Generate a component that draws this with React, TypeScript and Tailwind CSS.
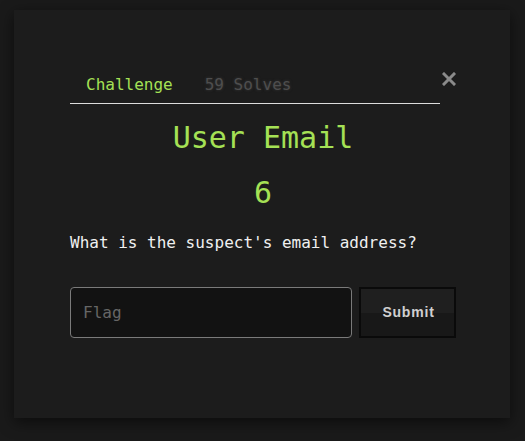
import React from "react";

export default function App() {
  const mono = { fontFamily: '"DejaVu Sans Mono", monospace' };
  return (
    <div className="w-[525px] h-[441px] bg-[#1a1a1a] pt-[10px] pl-[14px] overflow-hidden" style={mono}>
      <div className="relative w-[496px] h-[408px] bg-[#1c1c1c] shadow-[0_4px_14px_rgba(0,0,0,0.55)] pt-[53px] pl-[56px]">
        <button className="absolute left-[428px] top-[62px] w-[14px] h-[14px] text-[#888]" aria-label="Close">
          <svg width="14" height="14" viewBox="0 0 14 14">
            <path d="M2 2 L12 12 M12 2 L2 12" stroke="#8a8a8a" strokeWidth="3" strokeLinecap="square" />
          </svg>
        </button>
        <nav className="flex w-[370px] border-b border-[#dcdcdc]">
          <div className="px-4 pt-[10px] pb-[6px] text-[16px] leading-[24px] text-[#a5e155]">Challenge</div>
          <div
            className="px-4 pt-[10px] pb-[6px] text-[16px] leading-[24px] text-[#4e4e4e]"
            style={{ textShadow: "0 0 3px rgba(90,90,90,0.5)" }}
          >
            59 Solves
          </div>
        </nav>
        <div className="w-[386px]">
          <h2 className="mt-[16px] text-center text-[30px] leading-[36px] text-[#a5e155]">User Email</h2>
          <h3 className="mt-[19px] text-center text-[30px] leading-[36px] text-[#a5e155]">6</h3>
          <p className="mt-[20px] text-[16px] leading-[24px] text-[#f0f0f0]">What is the suspect's email address?</p>
          <div className="mt-[32px] flex gap-[7px]">
            <input
              placeholder="Flag"
              className="w-[282px] h-[51px] rounded-[4px] border border-[#7a7a7a] bg-[#121212] pl-[12px] text-[16px] text-[#ddd] placeholder:text-[#666] outline-none"
              style={mono}
            />
            <button
              className="w-[97px] h-[51px] border-2 border-[#0a0a0a] bg-[linear-gradient(#1f1f1f,#1f1f1f_50%,#181818_50%,#181818)] pl-[2px] text-[14px] font-bold tracking-[0.8px] text-[#d0d0d0]"
              style={{ fontFamily: '"Liberation Sans", Arial, sans-serif' }}
            >
              Submit
            </button>
          </div>
        </div>
      </div>
    </div>
  );
}
